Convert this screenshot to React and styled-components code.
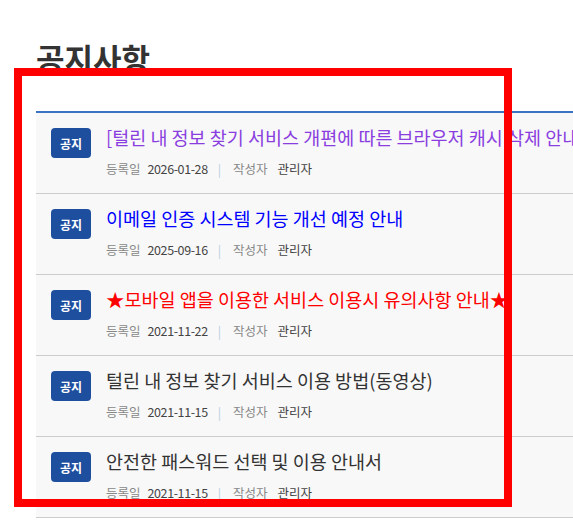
import styled, { createGlobalStyle } from 'styled-components';

const GlobalStyle = createGlobalStyle`
  html, body {
    margin: 0;
    padding: 0;
    background: #ffffff;
    overflow: hidden;
  }
  body {
    font-family: "Noto Sans CJK KR", "Noto Sans", sans-serif;
  }
`;

const PageWrapper = styled.section`
  position: relative;
  width: 573px;
  height: 532px;
  padding: 37px 0 0 36px;
  box-sizing: border-box;
  overflow: hidden;
`;

const PageTitle = styled.h2`
  margin: 0;
  font-size: 31px;
  line-height: 42px;
  font-weight: 700;
  color: #333333;
`;

const NoticeList = styled.ul`
  list-style: none;
  margin: 32px 0 0;
  padding: 0;
  border-top: 2px solid #3b74c3;
`;

const NoticeRow = styled.li`
  display: flex;
  align-items: flex-start;
  gap: 15px;
  height: 67px;
  padding: 13px 0 0 15px;
  background-color: #f8f8f8;
  border-bottom: 1px solid #cccccc;
`;

const Badge = styled.span`
  flex: none;
  width: 40px;
  height: 30px;
  margin-top: 2px;
  display: flex;
  justify-content: center;
  align-items: center;
  border-radius: 4px;
  background-color: #1e4f9f;
  color: #ffffff;
  font-size: 12px;
  font-weight: 700;
`;

const TextBox = styled.div`
  display: flex;
  flex-direction: column;
  min-width: 0;
`;

const NoticeTitle = styled.a`
  display: block;
  white-space: nowrap;
  font-size: 18.5px;
  line-height: 22px;
  color: ${(props) => props.$color || '#333333'};
  text-decoration: none;
`;

const MetaLine = styled.div`
  display: flex;
  align-items: center;
  margin-top: 11px;
  font-size: 12.5px;
  line-height: 20px;
  white-space: nowrap;
`;

const MetaLabel = styled.span`
  color: #888888;
  margin-right: ${(props) => props.$gap || 7}px;
`;

const MetaValue = styled.span`
  color: #444444;
  letter-spacing: ${(props) => (props.$date ? '-0.4px' : '0')};
`;

const Divider = styled.span`
  color: #b8cde4;
  margin: 0 12px 0 10px;
`;

const Highlight = styled.div`
  position: absolute;
  left: 14px;
  top: 68px;
  width: 498px;
  height: 439px;
  box-sizing: border-box;
  border: 8px solid #ff0000;
  pointer-events: none;
`;

const notices = [
  { title: '[털린 내 정보 찾기 서비스 개편에 따른 브라우저 캐시 삭제 안내]', date: '2026-01-28', color: '#8a3ee0' },
  { title: '이메일 인증 시스템 기능 개선 예정 안내', date: '2025-09-16', color: '#0000ff' },
  { title: '★모바일 앱을 이용한 서비스 이용시 유의사항 안내★', date: '2021-11-22', color: '#ff0000' },
  { title: '털린 내 정보 찾기 서비스 이용 방법(동영상)', date: '2021-11-15' },
  { title: '안전한 패스워드 선택 및 이용 안내서', date: '2021-11-15' },
];

const App = () => {
  return (
    <>
      <GlobalStyle />
      <PageWrapper>
        <PageTitle>공지사항</PageTitle>
        <NoticeList>
          {notices.map((item, i) => (
            <NoticeRow key={i}>
              <Badge>공지</Badge>
              <TextBox>
                <NoticeTitle href="#" $color={item.color}>
                  {item.title}
                </NoticeTitle>
                <MetaLine>
                  <MetaLabel>등록일</MetaLabel>
                  <MetaValue $date>{item.date}</MetaValue>
                  <Divider>|</Divider>
                  <MetaLabel $gap={10}>작성자</MetaLabel>
                  <MetaValue>관리자</MetaValue>
                </MetaLine>
              </TextBox>
            </NoticeRow>
          ))}
        </NoticeList>
        <Highlight />
      </PageWrapper>
    </>
  );
};

export default App;
